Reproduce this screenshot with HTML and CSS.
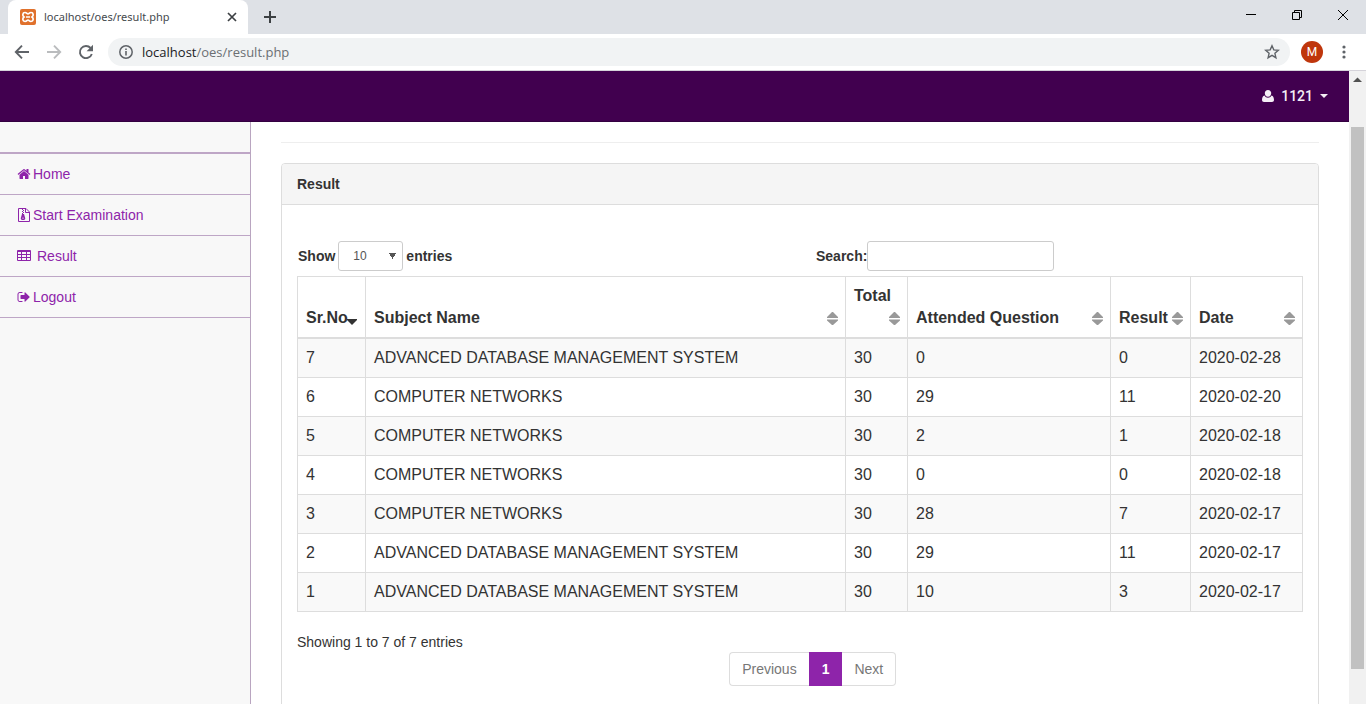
FILE: index.html
```
<!DOCTYPE html>
<html lang="en">
<head>
<meta charset="utf-8">
<title>localhost/oes/result.php</title>
<link rel="stylesheet" href="styles.css">
</head>
<body>
<svg class="defs" aria-hidden="true">
  <symbol id="sort" viewBox="0 0 11 13"><path d="M5 0h1l5 5v1H0V5zM0 7.500h11v1l-5 4.500H5L0 8.500z"/></symbol>
</svg>
<header class="browser">
  <div class="tabstrip">
    <div class="tab">
      <svg class="favicon" viewBox="0 0 16 16"><rect width="16" height="16" rx="2" fill="#e0712c"/><path d="M5 3.500c1.700 0 2 1.500 3 1.500s1.300-1.500 3-1.500c2.600 0 2.800 3.200 1 4.500 1.800 1.300 1.600 4.500-1 4.500-1.700 0-2-1.500-3-1.500s-1.300 1.500-3 1.500c-2.600 0-2.800-3.200-1-4.500C2.200 6.700 2.400 3.500 5 3.500z" fill="none" stroke="#fff" stroke-width="1.700"/><path d="M6 8h4" stroke="#fff" stroke-width="1.500"/></svg>
      <span class="tab-title">localhost/oes/result.php</span>
      <button class="plain" aria-label="Close tab"><svg width="10" height="10" viewBox="0 0 10 10"><path d="M1 1l8 8M9 1L1 9" stroke="#3c4043" stroke-width="1.700"/></svg></button>
    </div>
    <button class="plain new-tab" aria-label="New tab"><svg width="12" height="12" viewBox="0 0 12 12"><path d="M6 0v12M0 6h12" stroke="#3c4043" stroke-width="2"/></svg></button>
    <div class="window-controls">
      <button class="plain" aria-label="Minimize"><svg width="12" height="12" viewBox="0 0 12 12"><path d="M1 5.500h10" stroke="#000"/></svg></button>
      <button class="plain" aria-label="Restore"><svg width="12" height="12" viewBox="0 0 12 12"><path d="M1.500 3.500h7v7h-7zM3.500 3.500v-2h7v7h-2" fill="none" stroke="#000"/></svg></button>
      <button class="plain" aria-label="Close"><svg width="12" height="12" viewBox="0 0 12 12"><path d="M1 1l10 10M11 1L1 11" stroke="#000"/></svg></button>
    </div>
  </div>
  <div class="toolbar">
    <button class="plain" aria-label="Back"><svg width="16" height="16" viewBox="0 0 16 16"><path d="M15 8H2.500M8 1.700 1.800 8 8 14.300" fill="none" stroke="#5f6368" stroke-width="1.900"/></svg></button>
    <button class="plain" aria-label="Forward"><svg width="16" height="16" viewBox="0 0 16 16"><path d="M1 8h12.500M8 1.700 14.200 8 8 14.300" fill="none" stroke="#babcbe" stroke-width="1.900"/></svg></button>
    <button class="plain" aria-label="Reload"><svg width="16" height="16" viewBox="0 0 16 16"><path d="M13.800 10A6.100 6.100 0 1 1 12.600 4" fill="none" stroke="#5f6368" stroke-width="1.900"/><path d="M15 .8v6.400H8.600z" fill="#5f6368"/></svg></button>
    <div class="address">
      <svg width="14" height="14" viewBox="0 0 14 14"><circle cx="7" cy="7" r="6.200" fill="none" stroke="#5f6368" stroke-width="1.500"/><path d="M7 6v4.500M7 3.500V5" stroke="#5f6368" stroke-width="1.600"/></svg>
      <span class="url"><b>localhost</b>/oes/result.php</span>
      <button class="plain" aria-label="Bookmark"><svg width="16" height="16" viewBox="0 0 16 16"><path d="M8 1.800l1.800 4.100 4.500.4-3.400 3 1 4.400L8 11.400l-3.900 2.300 1-4.400-3.400-3 4.500-.4z" fill="none" stroke="#5f6368" stroke-width="1.400"/></svg></button>
    </div>
    <button class="plain avatar">M</button>
    <button class="plain" aria-label="Menu"><svg width="4" height="14" viewBox="0 0 4 14" fill="#5f6368"><circle cx="2" cy="2" r="1.600"/><circle cx="2" cy="7" r="1.600"/><circle cx="2" cy="12" r="1.600"/></svg></button>
  </div>
</header>

<div class="viewport">
  <div class="page">
    <nav class="navbar">
      <a class="user" href="#">
        <svg width="12" height="12" viewBox="0 0 12 12"><path d="M6 0c2 0 3.200 1.300 3.200 3.200S8 6.700 6 6.700 2.800 5.100 2.800 3.200 4 0 6 0zM2.500 5.500C3.300 7 4.500 7.700 6 7.700S8.700 7 9.500 5.500c1.700.5 2.500 2.200 2.500 4.500 0 1.300-.8 2-2 2H2c-1.200 0-2-.7-2-2 0-2.300.8-4 2.500-4.500z"/></svg>
        <span>1121</span>
        <svg width="8" height="4" viewBox="0 0 8 4"><path d="M0 0h8L4 4z"/></svg>
      </a>
    </nav>
    <div class="layout">
      <aside class="sidebar">
        <ul class="menu">
          <li><a href="#"><svg class="fa" viewBox="0 0 1792 1792"><path d="M1472 992v480q0 26-19 45t-45 19h-384v-384h-256v384h-384q-26 0-45-19t-19-45v-480q0-1 .5-3t.5-3l575-474 575 474q1 2 1 6zm223-69l-62 74q-8 9-21 11h-3q-13 0-21-7l-692-577-692 577q-12 8-24 7-13-2-21-11l-62-74q-8-10-7-23.500t11-21.500l719-599q32-26 76-26t76 26l244 204v-195q0-14 9-23t23-9h192q14 0 23 9t9 23v408l219 182q10 8 11 21.500t-7 23.500z"/></svg>Home</a></li>
          <li><a href="#"><svg class="fa" viewBox="0 0 14 14"><path d="M1.500.5h7.500L12.500 4v9.500h-11zM8.500.5v4h4" fill="none" stroke="currentColor"/><path d="M5 1h1v1H5zM6 2h1v1H6zM5 3h1v1H5zM6 4h1v1H6zM5 5h1v1H5zM5 6h2l1.200 4q.3 2-2.200 2t-2.200-2zM5.200 9.700v.9h1.600v-.9z" fill-rule="evenodd"/></svg>Start Examination</a></li>
          <li><a href="#" class="spaced"><svg class="fa" viewBox="0 0 14 14"><path d="M1 1h12q1 0 1 1v9q0 1-1 1H1q-1 0-1-1V2q0-1 1-1zM1 3v2h3V3zM5 3v2h4V3zM10 3v2h3V3zM1 6v2h3V6zM5 6v2h4V6zM10 6v2h3V6zM1 9v2h3V9zM5 9v2h4V9zM10 9v2h3V9z" fill-rule="evenodd"/></svg>Result</a></li>
          <li><a href="#"><svg class="fa" viewBox="0 0 1792 1792"><path d="M704 1440q0 4 1 20t.5 26.500-3 23.500-10 19.500-20.500 6.500h-320q-119 0-203.500-84.500t-84.500-203.500v-704q0-119 84.500-203.500t203.500-84.500h320q13 0 22.500 9.500t9.500 22.500q0 4 1 20t.5 26.500-3 23.500-10 19.500-20.500 6.500h-320q-66 0-113 47t-47 113v704q0 66 47 113t113 47h312l11.500 1 11.500 3 8 5.500 7 9 2 13.500zm928-544q0 26-19 45l-544 544q-19 19-45 19t-45-19-19-45v-288h-448q-26 0-45-19t-19-45v-384q0-26 19-45t45-19h448v-288q0-26 19-45t45-19 45 19l544 544q19 19 19 45z"/></svg>Logout</a></li>
        </ul>
      </aside>
      <main class="content">
        <hr>
        <section class="panel">
          <h1 class="panel-heading">Result</h1>
          <div class="panel-body">
            <div class="controls">
              <label>Show <select class="field"><option>10</option><option>25</option></select> entries</label>
              <label>Search:<input class="field search" type="search"></label>
            </div>
            <table class="results">
              <colgroup><col class="c-no"><col><col class="c-total"><col class="c-attended"><col class="c-result"><col class="c-date"></colgroup>
              <thead><tr>
                <th>Sr.No<svg class="sorted" viewBox="0 0 10 6"><path d="M0 0h10v1L5 6 0 1z"/></svg></th>
                <th>Subject Name<svg class="sort"><use href="#sort"/></svg></th>
                <th>Total<br>&nbsp;<svg class="sort"><use href="#sort"/></svg></th>
                <th>Attended Question<svg class="sort"><use href="#sort"/></svg></th>
                <th>Result<svg class="sort"><use href="#sort"/></svg></th>
                <th>Date<svg class="sort"><use href="#sort"/></svg></th>
              </tr></thead>
              <tbody>
                <tr><td>7</td><td>ADVANCED DATABASE MANAGEMENT SYSTEM</td><td>30</td><td>0</td><td>0</td><td>2020-02-28</td></tr>
                <tr><td>6</td><td>COMPUTER NETWORKS</td><td>30</td><td>29</td><td>11</td><td>2020-02-20</td></tr>
                <tr><td>5</td><td>COMPUTER NETWORKS</td><td>30</td><td>2</td><td>1</td><td>2020-02-18</td></tr>
                <tr><td>4</td><td>COMPUTER NETWORKS</td><td>30</td><td>0</td><td>0</td><td>2020-02-18</td></tr>
                <tr><td>3</td><td>COMPUTER NETWORKS</td><td>30</td><td>28</td><td>7</td><td>2020-02-17</td></tr>
                <tr><td>2</td><td>ADVANCED DATABASE MANAGEMENT SYSTEM</td><td>30</td><td>29</td><td>11</td><td>2020-02-17</td></tr>
                <tr><td>1</td><td>ADVANCED DATABASE MANAGEMENT SYSTEM</td><td>30</td><td>10</td><td>3</td><td>2020-02-17</td></tr>
              </tbody>
            </table>
            <div class="table-footer">
              <p class="info">Showing 1 to 7 of 7 entries</p>
              <nav class="pagination" aria-label="Pages"><a href="#">Previous</a><a href="#" class="current">1</a><a href="#">Next</a></nav>
            </div>
          </div>
        </section>
      </main>
    </div>
  </div>
  <div class="scrollbar"><svg width="17" height="17" viewBox="0 0 17 17"><path d="M4 11h9l-4.500-4.500z" fill="#505050"/></svg><div class="thumb"></div></div>
</div>
</body>
</html>
```

FILE: styles.css
```
* { box-sizing: border-box; }

body {
  margin: 0;
  height: 100vh;
  display: flex;
  flex-direction: column;
  overflow: hidden;
  background: #fff;
  color: #333;
  font: 14px/20px "Liberation Sans", Arial, sans-serif;
}

a { text-decoration: none; }
svg { flex: none; }
.defs { position: absolute; width: 0; height: 0; }
.fa { width: 14px; height: 14px; fill: currentColor; }

.plain {
  display: flex;
  align-items: center;
  justify-content: center;
  padding: 0;
  border: 0;
  background: none;
}

/* Browser frame */
.browser {
  flex: none;
  border-bottom: 1px solid #d5d3da;
  font-family: "Open Sans", "Noto Sans", sans-serif;
}

.tabstrip {
  display: flex;
  align-items: center;
  height: 34px;
  padding-left: 8px;
  background: #dee1e6;
}

.tab {
  display: flex;
  align-items: center;
  gap: 8px;
  width: 240px;
  height: 34px;
  padding: 0 11px 0 12px;
  border-radius: 8px 8px 0 0;
  background: #fff;
}

.favicon { width: 16px; height: 16px; }
.tab-title { flex: 1; color: #45494d; font-family: "Noto Sans", sans-serif; font-size: 11px; }
.new-tab { margin-left: 16px; }
.window-controls { display: flex; margin: 0 0 5px auto; }
.window-controls .plain { width: 46px; height: 28px; }

.toolbar {
  display: flex;
  align-items: center;
  gap: 16px;
  height: 36px;
  padding: 0 20px 0 14px;
}

.address {
  flex: 1;
  display: flex;
  align-items: center;
  gap: 9px;
  height: 28px;
  margin: 0 -5px 0 -2px;
  padding: 0 10px 0 11px;
  border-radius: 14px;
  background: #f1f3f4;
}

.url { flex: 1; color: #6b6f73; font-size: 13px; }
.url b { color: #202124; font-weight: 400; }

.avatar {
  width: 22px;
  height: 22px;
  margin-right: 3px;
  border-radius: 50%;
  background: #bf360c;
  color: #fff;
  font: 12px Roboto, sans-serif;
}

/* Page */
.viewport { flex: 1; display: flex; min-height: 0; }
.page { flex: 1; display: flex; flex-direction: column; min-width: 0; overflow: hidden; }

.navbar {
  flex: none;
  display: flex;
  justify-content: flex-end;
  padding: 15px 21px;
  border-bottom: 1px solid #330040;
  background: #41004f;
}

.user { display: flex; align-items: center; gap: 7px; color: #f5eff6; font-family: Roboto, sans-serif; font-weight: 500; }
.user svg { fill: currentColor; }

.layout { flex: 1; display: flex; min-height: 0; }

.sidebar {
  flex: none;
  width: 251px;
  padding-top: 30px;
  border-right: 1px solid #b9a5c0;
  background: #f8f8f8;
}

.menu { margin: 0; padding: 0; border-top: 2px solid #bea6c6; list-style: none; }
.menu a {
  display: flex;
  align-items: center;
  gap: 2px;
  padding: 10px 17px;
  border-bottom: 1px solid #bea6c6;
  color: #8e24aa;
}
.menu .spaced { gap: 6px; }

.content { flex: 1; min-width: 0; padding: 20px 30px; }
.content hr { margin: 0 0 20px; border: 0; border-top: 1px solid #eee; }

.panel { border: 1px solid #ddd; border-radius: 4px; }
.panel-heading {
  margin: 0;
  padding: 10px 15px;
  border-bottom: 1px solid #ddd;
  border-radius: 3px 3px 0 0;
  background: #f5f5f5;
  font-size: 14px;
  font-weight: 700;
}
.panel-body { padding: 36px 15px; }

.controls { display: grid; grid-template-columns: 1fr 1fr; column-gap: 30px; margin-bottom: 5px; }
.controls label { display: flex; align-items: center; gap: 3px; padding-left: 1px; font-weight: 700; }
.controls label + label { gap: 0; }

.field {
  height: 30px;
  border: 1px solid #ccc;
  border-radius: 3px;
  background-color: #fff;
  color: #555;
  font: 12px "Liberation Sans", Arial, sans-serif;
}
select.field {
  width: 65px;
  padding: 0 14px;
  appearance: none;
  background-image: conic-gradient(from -30deg at 50% 100%, #555 60deg, transparent 0);
  background-position: right 6px center;
  background-repeat: no-repeat;
  background-size: 7px 6px;
}
.search { width: 187px; }

.results {
  width: 100%;
  table-layout: fixed;
  border-collapse: collapse;
  font-size: 16px;
  line-height: 22px;
}
.results th, .results td { padding: 8px; border: 1px solid #ddd; text-align: left; }
.results th { position: relative; vertical-align: bottom; border-bottom-width: 2px; white-space: nowrap; }
.results tbody tr:nth-child(odd) { background: #f9f9f9; }
.c-no { width: 68px; }
.c-total { width: 62px; }
.c-attended { width: 203px; }
.c-result { width: 80px; }
.c-date { width: 112px; }

.sort { position: absolute; right: 7px; bottom: 12px; width: 11px; height: 13px; fill: #999; }
.sorted { position: absolute; right: 8px; bottom: 12px; width: 10px; height: 6px; fill: #333; }

.table-footer { display: grid; grid-template-columns: 5fr 7fr; }
.info { margin: 20px 0; }
.pagination { display: flex; align-self: start; margin-top: 40px; padding-left: 13px; }
.pagination a { padding: 6px 12px; border: 1px solid #ddd; color: #777; }
.pagination a:first-child { border-right: 0; border-radius: 4px 0 0 4px; }
.pagination a:last-child { border-left: 0; border-radius: 0 4px 4px 0; }
.pagination .current { border-color: #8e24aa; background: #8e24aa; color: #fff; font-weight: 700; }

.scrollbar { flex: none; display: flex; flex-direction: column; width: 17px; background: #f1f1f1; }
.thumb { width: 13px; height: 542px; max-height: 86%; margin: 39px 2px 0; background: #c1c1c1; }
```
